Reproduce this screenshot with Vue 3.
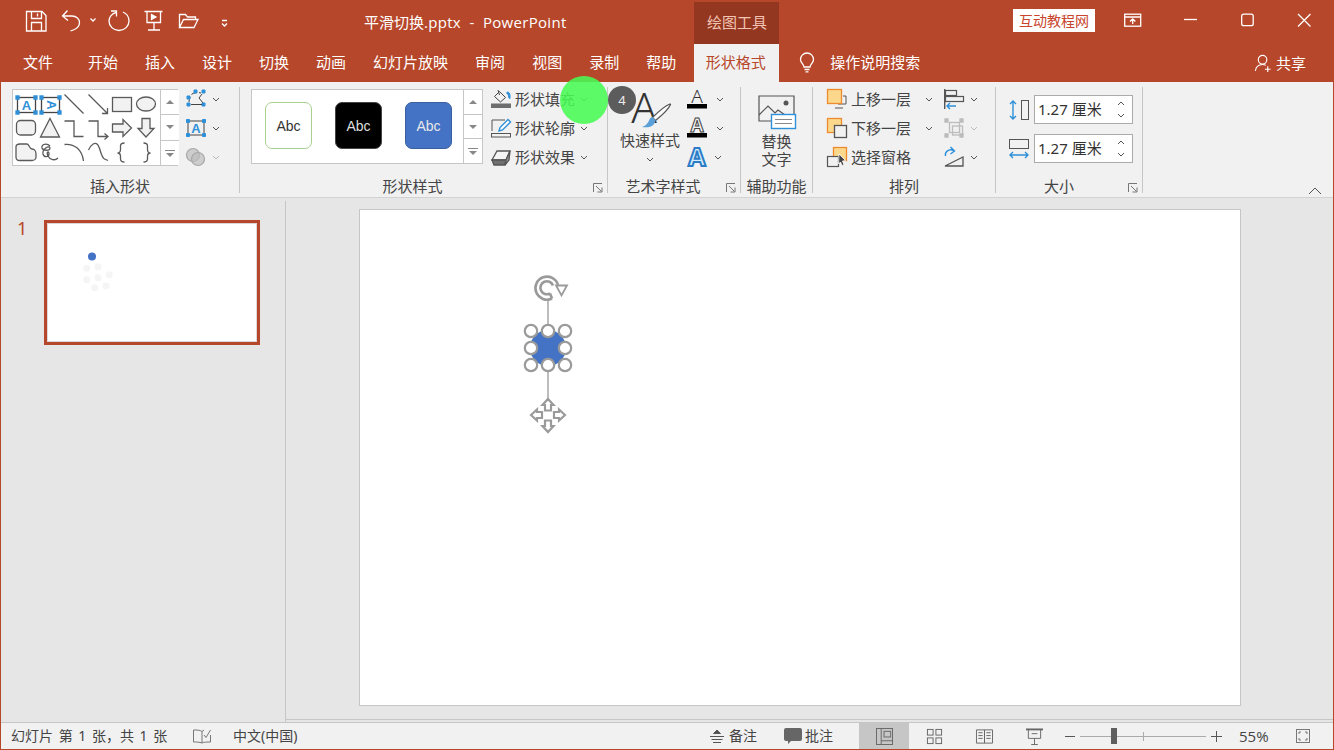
<script setup>
const tabs = ['开始', '插入', '设计', '切换', '动画', '幻灯片放映', '审阅', '视图', '录制', '帮助']
const fillDots = [[86.7, 268.3], [98, 266.7], [86.7, 279.7], [98, 277.7], [109.3, 274.7], [94.7, 287.7], [106, 286]]
const handles = [[531, 331], [548, 331], [565, 331], [531, 348], [565, 348], [531, 365], [548, 365], [565, 365]]
</script>

<template>
  <div class="app">
    <header class="titlebar">
      <svg class="qat" viewBox="0 0 240 44" fill="none" stroke="#fff" stroke-width="1.3">
        <path d="M26.5 11.5h15.500l4 4v15.500h-19.500z" />
        <path d="M31.500 11.500v7h10v-7M31.500 31v-8.500h10v8.500M37.500 13.500v3" />
        <path d="M67.500 10.500l-5 5.500 5.500 4.500M62.500 16h9.500c4.500 0 7.500 3 7.500 6.500 0 3-2 5.500-5 7l-4 1.500" />
        <path d="M90.500 18.500l2.500 2.500 2.500-2.500" />
        <path d="M116 12.500c-4 1-7 4.500-7 8.500 0 5 4.300 9.500 10 9.500s10-4.500 10-9.500c0-4-2.500-7.500-6-9" />
        <path d="M111 11h5.500v5.500" />
        <path d="M144.500 11.500h18M147 11.500v11h13.500v-11M154 22.500v7M148 30h12" />
        <path d="M151.500 14.500l4.500 2.500-4.500 2.500z" fill="#fff" />
        <path d="M179.500 27.500v-13h6l2 2.500h8v3M179.500 27.500l4-8h14.500l-4 8z" />
        <path d="M222 20.500h5M222 23.500l2.500 2.500 2.500-2.500" />
      </svg>
      <div class="doc-title">平滑切换<span class="latin">.pptx&nbsp; -&nbsp; PowerPoint</span></div>
      <div class="context-tab">绘图工具</div>
      <div class="brand">互动教程网</div>
      <svg class="winctl" viewBox="0 0 210 44" fill="none" stroke="#fff" stroke-width="1.3">
        <rect x="0.700" y="14.200" width="16" height="12" />
        <path d="M0.700 17h16M8.700 24v-5M6 21.500l2.700-2.700 2.700 2.700" />
        <path d="M60 19.500h13" />
        <rect x="117.700" y="14.200" width="11.500" height="11.500" rx="2" />
        <path d="M174 14l12.500 12.500M186.500 14l-12.500 12.500" />
      </svg>
    </header>

    <nav class="tabbar">
      <span class="tab tab-file">文件</span>
      <span v-for="t in tabs" :key="t" class="tab">{{ t }}</span>
      <span class="tab tab-active">形状格式</span>
      <svg class="bulb" viewBox="0 0 16 20" fill="none" stroke="#fff" stroke-width="1.300">
        <path d="M5 14c0-3-3.500-4-3.500-7.500a6.500 6.500 0 0 1 13 0C14.500 10 11 11 11 14zM5.500 16.500h5M6.500 18.800h3" />
      </svg>
      <span class="search">操作说明搜索</span>
      <span class="share">
        <svg viewBox="0 0 20 20" fill="none" stroke="#fff" stroke-width="1.200">
          <circle cx="9" cy="6" r="4.500" />
          <path d="M1.500 18c0-4 3-7 7.500-7 1.500 0 2.500.3 3.500 1M14.500 13v6M11.500 16h6" />
        </svg>
        共享
      </span>
    </nav>

    <section class="ribbon">
      <div class="group g1">
        <div class="body">
          <div class="gallery gal-shapes">
            <svg class="shapes" viewBox="13 90 147 75" fill="none" stroke="#5a5a5a" stroke-width="1.300">
              <rect x="17.500" y="97.500" width="18" height="15" stroke="#444" />
              <text x="26.500" y="109.500" class="ga">A</text>
              <path d="M16 96h3v3h-3zM34 96h3v3h-3zM16 111h3v3h-3zM34 111h3v3h-3z" fill="#2e90d8" stroke="#2e90d8" />
              <rect x="41.500" y="97.500" width="18" height="15" stroke="#444" />
              <text x="50.500" y="109" class="ga" transform="rotate(90 50.500 105)">A</text>
              <path d="M40 96h3v3h-3zM58 96h3v3h-3zM40 111h3v3h-3zM58 111h3v3h-3z" fill="#2e90d8" stroke="#2e90d8" />
              <path d="M64.500 94.500l19 19M88.500 94.500l19 19M107.500 108v5.500h-5.500" />
              <rect x="112.500" y="97.500" width="19" height="14" fill="#f2f2f2" />
              <ellipse cx="146" cy="104" rx="9.500" ry="7" fill="#f2f2f2" />
              <rect x="16.500" y="120.500" width="19" height="14.500" rx="4" fill="#f2f2f2" />
              <path d="M50 118.500l9.500 18.500h-19z" fill="#f2f2f2" />
              <path d="M64.500 121h9.500v15.500h9.500M88.500 121h9.500v15.500h9M104.500 133.500l3.500 3-3.500 3" />
              <path d="M112.500 124h10.500v-4.500l8.500 8.500-8.500 8.500V132h-10.500z" fill="#f2f2f2" />
              <path d="M142 118.500h8v10h4l-8 8.500-8-8.500h4z" fill="#f2f2f2" />
              <path d="M20 144h7c2.500 0 2 5 5 5 3 0 4 3 4 5v3c0 2-2 3.500-4 3.500H19.500c-2 0-3.500-1.500-3.500-3.500v-10c0-2 2-3 4-3z" fill="#f2f2f2" />
              <path d="M50 146c-3-3-9-2-8 2 1 3 8 3 8 0-1-3-8 1-7 6 1 4 6 3 6 0 0-4-3-2-1 2 2 4 7 5 10 2" />
              <path d="M64.500 144.500c10-1 17.500 5 19 16.500M88.500 150c3-6 6.500-8 9-5.500 3 3 3 12 7 14.500l3.500 1.500" />
              <path d="M124.500 143c-3 0-4 1-4 3v3.500c0 2.500-1 3.500-3 3.500 2 0 3 1 3 3.500v2.500c0 2 1 3 4 3M143.500 143c3 0 4 1 4 3v3.500c0 2.500 1 3.500 3 3.500-2 0-3 1-3 3.500v2.500c0 2-1 3-4 3" />
            </svg>
            <div class="scroll">
              <span class="sb"><i class="up"></i></span>
              <span class="sb"><i class="down"></i></span>
              <span class="sb"><i class="more"></i></span>
            </div>
          </div>
          <div class="rows tools">
            <div class="btn">
              <svg class="ic" viewBox="0 0 20 20" fill="none" stroke="#444">
                <path d="M3 13c0-3 1-5 3-8 2-1 5-2 9-1" stroke-dasharray="5 3" />
                <path d="M1 7h3v3H1zM16 1h3v3h-3zM16 14h3v3h-3zM1 14h3v3H1zM8 1h3v3H8z" fill="#2e90d8" stroke="#2e90d8" />
                <path d="M5 15.500h11M16 5l-3 4 4 5" />
              </svg>
              <svg class="chev c1" viewBox="0 0 8 5"><path d="M1 1l3 3 3-3" /></svg>
            </div>
            <div class="btn">
              <svg class="ic" viewBox="0 0 20 20" fill="none" stroke="#444">
                <rect x="2" y="3" width="16" height="14" />
                <text x="10" y="15" class="gb">A</text>
                <path d="M0.500 1.500h3v3h-3zM16.500 1.500h3v3h-3zM0.500 15.500h3v3h-3zM16.500 15.500h3v3h-3z" fill="#2e90d8" stroke="#2e90d8" />
              </svg>
              <svg class="chev c1" viewBox="0 0 8 5"><path d="M1 1l3 3 3-3" /></svg>
            </div>
            <div class="btn">
              <svg class="ic" viewBox="0 0 20 20" fill="#bdbdbd" fill-opacity=".7" stroke="#a8a8a8" stroke-width="1.200">
                <circle cx="7" cy="8" r="6.500" />
                <circle cx="12" cy="12" r="6.500" />
              </svg>
              <svg class="chev c1 dim" viewBox="0 0 8 5"><path d="M1 1l3 3 3-3" /></svg>
            </div>
          </div>
        </div>
        <div class="label">插入形状</div>
      </div>

      <div class="group g2">
        <div class="body">
          <div class="gallery gal-styles">
            <div class="swatches">
              <span class="swatch s-a">Abc</span>
              <span class="swatch s-b">Abc</span>
              <span class="swatch s-c">Abc</span>
            </div>
            <div class="scroll">
              <span class="sb"><i class="up"></i></span>
              <span class="sb"><i class="down"></i></span>
              <span class="sb"><i class="more"></i></span>
            </div>
          </div>
          <div class="rows fmt">
            <div class="btn">
              <svg class="ic" viewBox="0 0 20 20" fill="none" stroke="#444">
                <rect x="0" y="14.500" width="20" height="4.500" fill="#6e6e6e" stroke="none" />
                <path d="M3.500 7.500l5-5 6 6-5 4.500z" />
                <path d="M7 1l1.500 5" />
                <path d="M16 3c2 0 3 1.500 3 3.500v3c-1 0-1.500-1-1.500-2.500S17 5 16 5z" fill="#2e90d8" stroke="#2e90d8" />
              </svg>
              <span>形状填充</span>
              <svg class="chev c2" viewBox="0 0 8 5"><path d="M1 1l3 3 3-3" /></svg>
            </div>
            <div class="btn">
              <svg class="ic" viewBox="0 0 20 20" fill="none" stroke="#555">
                <path d="M1 13V2h13" />
                <rect x="0.500" y="15.500" width="19" height="3.500" />
                <path d="M8 13l1-3.500 8-8 2.500 2.500-8 8z" fill="#fff" stroke="#2e90d8" stroke-width="1.400" />
              </svg>
              <span>形状轮廓</span>
              <svg class="chev c2" viewBox="0 0 8 5"><path d="M1 1l3 3 3-3" /></svg>
            </div>
            <div class="btn">
              <svg class="ic" viewBox="0 0 20 20" fill="#dcdcdc" stroke="#555" stroke-width="1.300">
                <path d="M1 13l5-9h13l-4 9z" fill="#f4f4f4" />
                <path d="M1 13l2 5h11l1-5z" fill="#707070" />
                <path d="M15 13l-1 5 4-5 1-9z" fill="#9a9a9a" />
              </svg>
              <span>形状效果</span>
              <svg class="chev c2" viewBox="0 0 8 5"><path d="M1 1l3 3 3-3" /></svg>
            </div>
          </div>
        </div>
        <div class="label lab-off">形状样式<svg class="launch" viewBox="0 0 10 10" fill="none" stroke="#777"><path d="M.5 9V.5H9M3 3l5.500 5.500M9 4.500V9H4.500" /></svg></div>
      </div>

      <div class="group g3">
        <div class="body">
          <div class="bigbtn">
            <svg class="big-a" viewBox="0 0 52 40">
              <text x="20" y="33" class="bigA">A</text>
              <path d="M46 14c-5 2-13 9-17.500 13.500l3 3c5-4 13-11 15-16z" fill="#fafafa" stroke="#555" stroke-width="1.200" />
              <path d="M28.500 27c-3 0-3 4-5 6-1 2-3 3-5.500 4 6.500 1 12.500 0 13.500-7z" fill="#5a9fd8" />
            </svg>
            <span>快速样式</span>
            <svg class="chev" viewBox="0 0 8 5"><path d="M1 1l3 3 3-3" /></svg>
          </div>
          <div class="rows art">
            <div class="btn">
              <svg class="ic" viewBox="0 0 20 20"><text x="10" y="14" class="gc">A</text><rect y="15" width="20" height="4.500" fill="#000" /></svg>
              <svg class="chev c3" viewBox="0 0 8 5"><path d="M1 1l3 3 3-3" /></svg>
            </div>
            <div class="btn">
              <svg class="ic" viewBox="0 0 20 20"><text x="10" y="14" class="gd">A</text><rect y="15" width="20" height="4.500" fill="#000" /></svg>
              <svg class="chev c3" viewBox="0 0 8 5"><path d="M1 1l3 3 3-3" /></svg>
            </div>
            <div class="btn">
              <svg class="ic" viewBox="0 0 20 20"><text x="10" y="19" class="ge">A</text></svg>
              <svg class="chev c3 c3b" viewBox="0 0 8 5"><path d="M1 1l3 3 3-3" /></svg>
            </div>
          </div>
        </div>
        <div class="label lab-off">艺术字样式<svg class="launch" viewBox="0 0 10 10" fill="none" stroke="#777"><path d="M.5 9V.5H9M3 3l5.500 5.500M9 4.500V9H4.500" /></svg></div>
      </div>

      <div class="group g4">
        <div class="body">
          <div class="bigbtn alt">
            <svg class="pic" viewBox="0 0 38 36" fill="none" stroke="#555" stroke-width="1.200">
              <path d="M13 26H1V1h35v18" />
              <path d="M1 20l9-9 7 7 3-3 7 5" />
              <circle cx="28" cy="8" r="2.500" fill="#555" stroke="none" />
              <rect x="13.500" y="19.500" width="24" height="14" fill="#fff" stroke="#2e90d8" stroke-width="1.400" />
              <path d="M17 24.500h17M17 28.500h17" stroke="#888" />
            </svg>
            <span>替换</span>
            <span>文字</span>
          </div>
        </div>
        <div class="label">辅助功能</div>
      </div>

      <div class="group g5">
        <div class="body">
          <div class="rows order">
            <div class="btn">
              <svg class="ic" viewBox="0 0 20 20" fill="none" stroke="#555">
                <path d="M11 15h8V7h-3" /><path d="M8 19h8" />
                <rect x="0.500" y="0.500" width="14" height="14" fill="#fbd88c" stroke="#ed8b2f" stroke-width="1.300" />
              </svg>
              <span>上移一层</span>
              <svg class="chev c4" viewBox="0 0 8 5"><path d="M1 1l3 3 3-3" /></svg>
            </div>
            <div class="btn">
              <svg class="ic" viewBox="0 0 20 20" fill="none" stroke="#555">
                <rect x="0.500" y="0.500" width="14" height="14" fill="#fbd88c" stroke="#ed8b2f" stroke-width="1.300" />
                <rect x="7.500" y="7.500" width="12" height="12" fill="#f1f1f1" stroke-width="1.300" />
              </svg>
              <span>下移一层</span>
              <svg class="chev c4" viewBox="0 0 8 5"><path d="M1 1l3 3 3-3" /></svg>
            </div>
            <div class="btn">
              <svg class="ic" viewBox="0 0 20 20" fill="none" stroke="#555">
                <rect x="6.500" y="0.500" width="13" height="13" fill="#fbd88c" stroke="#ed8b2f" stroke-width="1.300" />
                <rect x="0.500" y="9.500" width="11" height="10" fill="#f1f1f1" stroke-width="1.200" />
                <path d="M12 7l6.500 6.500-3 .5 1.500 4-2 .5-1.500-3.500-2 2z" fill="#444" stroke="#fff" stroke-width=".8" />
              </svg>
              <span>选择窗格</span>
            </div>
          </div>
          <div class="rows order2">
            <div class="btn">
              <svg class="ic" viewBox="0 0 20 20" fill="none" stroke="#555" stroke-width="1.200">
                <path d="M.7 0v20" stroke-width="1.400" />
                <rect x="1.500" y="1.500" width="11" height="5" />
                <rect x="1.500" y="7.500" width="18" height="5" />
                <path d="M12 17H3M6 14l-3 3 3 3" stroke="#2e90d8" stroke-width="1.400" />
              </svg>
              <svg class="chev c5" viewBox="0 0 8 5"><path d="M1 1l3 3 3-3" /></svg>
            </div>
            <div class="btn">
              <svg class="ic dimic" viewBox="0 0 20 20" fill="none" stroke="#bcbcbc" stroke-width="1.300">
                <rect x="5.500" y="4.500" width="10" height="10" />
                <rect x="8.500" y="8" width="10" height="9" />
                <path d="M1 1h3v3H1zM16 1h3v3h-3zM1 16h3v3H1zM16 16h3v3h-3z" fill="#bcbcbc" />
              </svg>
              <svg class="chev c5 dim" viewBox="0 0 8 5"><path d="M1 1l3 3 3-3" /></svg>
            </div>
            <div class="btn">
              <svg class="ic" viewBox="0 0 20 20" fill="none">
                <path d="M1 19l18-9v9z" stroke="#555" stroke-width="1.300" />
                <path d="M1.500 9c-1-4 3-7 7-6l2 1M6.500 0l4 4-4 3" stroke="#2e90d8" stroke-width="1.400" />
              </svg>
              <svg class="chev c5" viewBox="0 0 8 5"><path d="M1 1l3 3 3-3" /></svg>
            </div>
          </div>
        </div>
        <div class="label">排列</div>
      </div>

      <div class="group g6">
        <div class="body">
          <div class="sizes">
            <div class="size">
              <svg class="ic" viewBox="0 0 20 20" fill="none" stroke="#555">
                <rect x="12.500" y="0.500" width="7" height="19" />
                <path d="M4 1v18M1 4l3-3 3 3M1 16l3 3 3-3" stroke="#2e90d8" stroke-width="1.400" />
              </svg>
              <div class="spin">1.27 厘米
                <span class="arrows">
                  <svg viewBox="0 0 8 5"><path d="M1 4l3-3 3 3" /></svg>
                  <svg viewBox="0 0 8 5"><path d="M1 1l3 3 3-3" /></svg>
                </span>
              </div>
            </div>
            <div class="size">
              <svg class="ic" viewBox="0 0 20 20" fill="none" stroke="#555">
                <rect x="0.500" y="0.500" width="19" height="9" />
                <path d="M1 16h18M4 13l-3 3 3 3M16 13l3 3-3 3" stroke="#2e90d8" stroke-width="1.400" />
              </svg>
              <div class="spin">1.27 厘米
                <span class="arrows">
                  <svg viewBox="0 0 8 5"><path d="M1 4l3-3 3 3" /></svg>
                  <svg viewBox="0 0 8 5"><path d="M1 1l3 3 3-3" /></svg>
                </span>
              </div>
            </div>
          </div>
        </div>
        <div class="label lab-off2">大小<svg class="launch" viewBox="0 0 10 10" fill="none" stroke="#777"><path d="M.5 9V.5H9M3 3l5.500 5.500M9 4.500V9H4.500" /></svg></div>
      </div>

      <div class="spot"></div>
      <div class="badge">4</div>
      <svg class="collapse" viewBox="0 0 14 8" fill="none" stroke="#555"><path d="M1 7l6-6 6 6" /></svg>
    </section>

    <main class="main">
      <aside class="panel">
        <span class="num">1</span>
        <div class="thumb">
          <svg viewBox="47 223 210 119">
            <circle v-for="d in fillDots" :key="d[0] + '-' + d[1]" :cx="d[0]" :cy="d[1]" r="3.500" fill="#f5f5f5" />
            <circle cx="92" cy="256.500" r="4" fill="#4472c4" />
          </svg>
        </div>
      </aside>
      <div class="stage">
        <div class="slide">
          <svg viewBox="360 210 880 495" fill="none" stroke="#9a9a9a">
            <path d="M548 300v28M548 368v30" stroke-width="1.300" />
            <circle cx="548" cy="348" r="18" fill="#4472c4" stroke="none" />
            <circle v-for="h in handles" :key="h[0] + '-' + h[1]" :cx="h[0]" :cy="h[1]" r="6.200" fill="#fff" stroke-width="2.200" />
            <path d="M550 293.500l2 5M552 298.500A11.500 11.500 0 1 1 558 285M550 293.500A6.500 6.500 0 1 1 553 285.500" stroke-width="2.600" />
            <path d="M556 285.500h11l-5.500 10z" fill="#fff" stroke-width="1.800" />
            <path d="M548 399l5.500 6h-2.500v5.500h-6V405h-2.500zM548 432l5.500-6h-2.500v-5.500h-6v5.500h-2.500zM531 415l6-5.500v2.500h5v6h-5v2.500zM565 415l-6-5.500v2.500h-5v6h5v2.500z" fill="#fff" stroke-width="2.200" />
          </svg>
        </div>
      </div>
    </main>

    <footer class="status">
      <span class="st-info">幻灯片 第 1 张，共 1 张</span>
      <svg class="st-book" viewBox="0 0 18 14" fill="none" stroke="#777"><path d="M9 2.500C7 1 4 1 .5 1v12c3 0 6 0 8.500 1V2.500zM9 14c2-1 5-1 8.500-1V6M9 2.500l2-1.500M11 6l2 2.500L17.500 1" /></svg>
      <span class="st-lang">中文(中国)</span>
      <svg class="st-notes" viewBox="0 0 14 14" fill="none" stroke="#555"><path d="M3.500 4.500L7 1l3.500 3.500z" fill="#555" /><path d="M0 7.500h14M1.500 10.500h11M3 13.500h8" /></svg>
      <span class="st-t1">备注</span>
      <svg class="st-bubble" viewBox="0 0 18 16"><path d="M2 0h14a2 2 0 0 1 2 2v9a2 2 0 0 1-2 2H7l-3 3v-3H2a2 2 0 0 1-2-2V2a2 2 0 0 1 2-2z" fill="#666" /></svg>
      <span class="st-t2">批注</span>
      <span class="view active">
        <svg viewBox="0 0 18 18" fill="none" stroke="#666"><rect x="0.500" y="0.500" width="17" height="17" /><path d="M5.500 1v16M5.500 13.500h12" /><rect x="8.500" y="3.500" width="7" height="6" /></svg>
      </span>
      <span class="view">
        <svg viewBox="0 0 18 18" fill="none" stroke="#666"><rect x="1.500" y="1.500" width="6" height="6" /><rect x="10.500" y="1.500" width="6" height="6" /><rect x="1.500" y="10.500" width="6" height="6" /><rect x="10.500" y="10.500" width="6" height="6" /></svg>
      </span>
      <span class="view">
        <svg viewBox="0 0 18 18" fill="none" stroke="#666"><path d="M.5 2h8.500v14H.5zM9 2h8.500v14H9zM2.500 5h4.500M2.500 8h4.500M2.500 11h4.500M11 5h4.500M11 8h4.500M11 11h4.500" /></svg>
      </span>
      <span class="view">
        <svg viewBox="0 0 18 18" fill="none" stroke="#666"><path d="M0 1.500h18" stroke-width="2" /><path d="M2.500 2v9h13V2M9 11v6M5.500 17.500h7M6 6h6" /></svg>
      </span>
      <div class="zoom">
        <span class="z-minus"></span>
        <div class="track"><i class="thumbz"></i><i class="tick"></i></div>
        <span class="z-plus"></span>
      </div>
      <span class="pct">55%</span>
      <svg class="fit" viewBox="0 0 14 14" fill="none" stroke="#777"><rect x="0.500" y="0.500" width="13" height="13" /><path d="M3 5V3h2M9 3h2v2M3 9v2h2M9 11h2V9" /></svg>
    </footer>
  </div>
</template>

<style>
html, body { margin: 0; }
</style>

<style scoped>
.app {
  width: 1334px; height: 750px; box-sizing: border-box; overflow: hidden;
  display: flex; flex-direction: column; background: #e6e6e6;
  border-left: 1px solid #b7472a; border-right: 1px solid #b7472a; border-bottom: 1px solid #b7472a;
  font: 15px/20px "Noto Sans", "Noto Sans CJK SC", sans-serif; color: #444;
}
svg { display: block; flex: none; overflow: visible; }

.titlebar { display: flex; height: 44px; flex: none; background: #b7472a; color: #fff; margin-left: -1px; margin-right: -1px; }
.qat { width: 240px; height: 44px; }
.doc-title { width: 330px; margin-left: 124px; line-height: 44px; color: #fff; white-space: nowrap; font-family: "Open Sans", "Noto Sans CJK SC", sans-serif; }
.latin { letter-spacing: .3px; }
.context-tab { box-sizing: border-box; width: 85px; height: 42px; margin-top: 2px; padding-left: 1px; background: #933720; color: #f3c4b4; text-align: center; line-height: 40px; }
.brand { width: 82px; height: 23px; margin: 9px 0 0 234px; background: #fff; color: #c8452c; text-align: center; line-height: 23px; font-size: 14px; }
.winctl { width: 210px; height: 44px; margin-left: 29px; }

.tabbar { display: flex; align-items: center; gap: 27px; height: 38px; flex: none; background: #b7472a; color: #fff; padding-left: 22px; margin-right: -1px; }
.tab { line-height: 36px; height: 38px; white-space: nowrap; }
.tab-file { margin-right: 8px; }
.tab-active { box-sizing: border-box; margin-left: -9px; width: 85px; padding-right: 2px; text-align: center; background: #f1f1f1; color: #b7472a; }
.bulb { width: 16px; height: 20px; margin-left: -7px; }
.search { margin-left: -12px; white-space: nowrap; line-height: 36px; height: 38px; }
.share { display: flex; align-items: center; gap: 3px; margin-left: auto; margin-right: 28px; }
.share svg { width: 19px; height: 19px; }

.ribbon { position: relative; display: flex; height: 106px; flex: none; padding: 5px 0 4px; background: #f1f1f1; border-bottom: 1px solid #d2d2d2; }
.group { box-sizing: border-box; height: 106px; border-right: 1px solid #c6c6c6; display: flex; flex-direction: column; flex: none; }
.body { height: 90px; display: flex; align-items: flex-start; flex: none; }
.label { position: relative; height: 16px; line-height: 18px; text-align: center; white-space: nowrap; }
.lab-off { padding-right: 22px; }
.lab-off2 { padding-right: 20px; }
.launch { position: absolute; right: 4px; bottom: 0; width: 10px; height: 10px; }
.g1 { width: 239px; }
.g2 { width: 368px; }
.g3 { width: 133px; }
.g4 { width: 72px; }
.g5 { width: 183px; }
.g6 { width: 147px; }

.gallery { display: flex; box-sizing: border-box; margin-top: 2px; background: #fff; border: 1px solid #c6c6c6; }
.gal-shapes { width: 166px; height: 77px; margin-left: 11px; }
.shapes { width: 147px; height: 75px; }
.gal-styles { width: 232px; height: 75px; margin-left: 11px; }
.scroll { display: flex; flex-direction: column; flex: none; width: 18px; margin-left: auto; border-left: 1px solid #c6c6c6; background: #fff; }
.sb { flex: 1; display: flex; align-items: center; justify-content: center; border-bottom: 1px solid #c6c6c6; }
.sb:last-child { border-bottom: 0; }
.sb i { display: block; width: 0; height: 0; position: relative; border-left: 4px solid transparent; border-right: 4px solid transparent; }
.up { border-bottom: 4px solid #888; }
.down { border-top: 4px solid #888; }
.more { border-top: 4px solid #888; margin-top: 4px; }
.more::before { content: ""; position: absolute; left: -5px; top: -7px; width: 10px; height: 1px; background: #888; }
.swatches { display: flex; gap: 23px; padding: 12px 0 0 13px; }
.swatch { box-sizing: border-box; width: 47px; height: 47px; border-radius: 7px; display: flex; align-items: center; justify-content: center; font: 14px "Liberation Sans", sans-serif; }
.s-a { background: #fff; border: 1px solid #a9d18e; color: #333; }
.s-b { background: #000; border: 1px solid #444; color: #ddd; }
.s-c { background: #4472c4; border: 1px solid #3a5f9f; color: #e8e8e8; }

.rows { display: flex; flex-direction: column; gap: 9px; padding-top: 2px; flex: none; }
.btn { display: flex; align-items: center; height: 20px; white-space: nowrap; }
.ic { width: 20px; height: 20px; flex: none; }
.chev { width: 8px; height: 5px; fill: none; stroke: #555; stroke-width: 1; flex: none; }
.chev.dim { stroke: #bbb; }
.tools { margin-left: 8px; }
.c1 { margin-left: 6px; }
.fmt { margin-left: 8px; }
.fmt .btn span { margin-left: 4px; width: 60px; }
.c2 { margin-left: 5px; }

.bigbtn { display: flex; flex-direction: column; align-items: center; width: 60px; margin-left: 12px; }
.big-a { width: 52px; height: 40px; margin-top: 3px; }
.bigA { font: 300 42px "Noto Sans", sans-serif; fill: #333; text-anchor: middle; }
.bigbtn .chev { margin-top: 7px; }
.art { margin-left: 7px; }
.c3 { margin-left: 9px; }
.c3b { margin-left: 7px; }
.alt { width: 72px; margin-left: 0; }
.alt .pic { width: 38px; height: 36px; margin: 8px 0 0; }
.alt span { line-height: 18px; }
.alt span:first-of-type { margin-top: 1px; }

.order { margin-left: 14px; }
.order .btn span { margin-left: 4px; width: 60px; }
.c4 { margin-left: 14px; }
.order2 { margin-left: 11px; }
.c5 { margin-left: 6px; }

.sizes { display: flex; flex-direction: column; gap: 10px; padding: 8px 0 0 13px; }
.size { display: flex; align-items: center; gap: 5px; }
.spin { position: relative; box-sizing: border-box; width: 99px; height: 29px; border: 1px solid #ababab; background: #fff; padding-left: 3px; line-height: 27px; color: #333; white-space: nowrap; }
.arrows { position: absolute; right: 7px; top: 5px; display: flex; flex-direction: column; gap: 7px; }
.arrows svg { width: 8px; height: 5px; fill: none; stroke: #555; }

.spot { position: absolute; left: 559px; top: -6px; width: 48px; height: 48px; border-radius: 50%; background: rgba(72, 250, 84, .88); }
.badge { position: absolute; left: 607px; top: 4px; width: 28px; height: 28px; border-radius: 50%; background: #5c5c5c; color: #eee; text-align: center; font: 400 13px/28px "Noto Sans", sans-serif; }
.collapse { position: absolute; right: 11px; top: 105px; width: 14px; height: 8px; }

.main { flex: 1; min-height: 0; display: flex; padding-top: 3px; background: #e6e6e6; }
.panel { box-sizing: border-box; width: 285px; display: flex; align-items: flex-start; padding: 19px 0 0 16px; border-right: 1px solid #c6c6c6; flex: none; }
.num { width: 27px; color: #b7472a; font-size: 18px; line-height: 16px; }
.thumb { box-sizing: border-box; width: 216px; height: 125px; border: 3px solid #b7472a; background: #fff; box-shadow: inset 0 0 0 1px #d9d9d9; flex: none; }
.thumb svg { width: 210px; height: 119px; }
.stage { flex: 1; box-sizing: border-box; padding: 8px 0 0 73px; border-bottom: 1px solid #c6c6c6; margin-bottom: 2px; }
.slide { box-sizing: border-box; width: 882px; height: 497px; background: #fff; border: 1px solid #c6c6c6; }
.slide svg { width: 880px; height: 495px; }

.status { display: flex; align-items: center; height: 26px; flex: none; background: #f1f1f1; border-top: 1px solid #c6c6c6; font-size: 14px; color: #444; white-space: nowrap; }
.st-info { margin-left: 10px; width: 158px; word-spacing: 2px; }
.st-book { width: 18px; height: 14px; margin-left: 24px; }
.st-lang { margin-left: 22px; width: 70px; }
.st-notes { width: 14px; height: 14px; margin-left: 407px; }
.st-t1 { margin-left: 5px; width: 30px; }
.st-bubble { width: 18px; height: 16px; margin-left: 25px; }
.st-t2 { margin-left: 3px; width: 30px; }
.view { display: flex; align-items: center; justify-content: center; width: 50px; height: 26px; flex: none; }
.view svg { width: 17px; height: 17px; }
.view.active { background: #c6c6c6; margin-left: 24px; }
.zoom { display: flex; align-items: center; width: 157px; margin-left: 6px; height: 26px; position: relative; flex: none; }
.z-minus { position: absolute; left: 0; width: 10px; height: 1px; background: #555; }
.z-plus { position: absolute; left: 146px; width: 11px; height: 1px; background: #555; }
.z-plus::after { content: ""; position: absolute; left: 5px; top: -5px; width: 1px; height: 11px; background: #555; }
.track { position: relative; width: 126px; height: 1px; margin-left: 15px; background: #aaa; }
.thumbz { position: absolute; left: 31px; top: -8px; width: 6px; height: 16px; background: #5f5f5f; }
.tick { position: absolute; left: 63px; top: -4px; width: 1px; height: 9px; background: #aaa; }
.pct { margin-left: 17px; width: 31px; font: 15px/20px "Open Sans", sans-serif; }
.fit { width: 14px; height: 14px; margin-left: 26px; }

.ga { font: 700 13px "Liberation Sans", sans-serif; fill: #2e90d8; stroke: none; text-anchor: middle; }
.gb { font: 700 13px "Liberation Sans", sans-serif; fill: #2e90d8; stroke: none; text-anchor: middle; }
.gc { font: 300 19px "Noto Sans", sans-serif; fill: #333; text-anchor: middle; }
.gd { font: 700 19px "Noto Sans", sans-serif; fill: #f1f1f1; stroke: #444; stroke-width: 1; text-anchor: middle; }
.ge { font: 700 25px "Noto Sans", sans-serif; fill: #d6ecfa; stroke: #2a7cc7; stroke-width: 2; paint-order: normal; text-anchor: middle; }
</style>
